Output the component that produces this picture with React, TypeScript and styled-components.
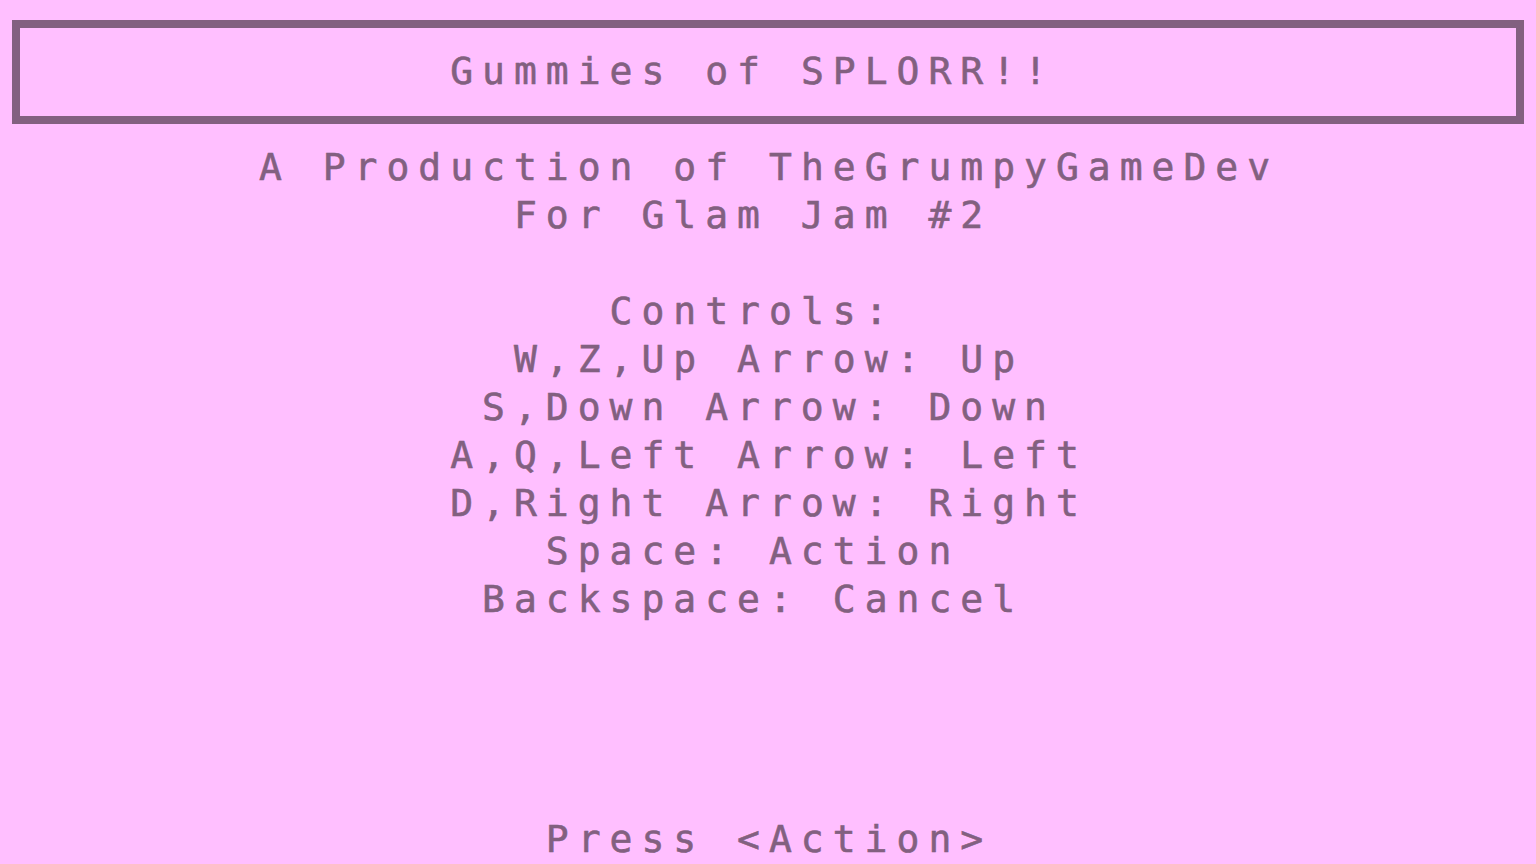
import React from 'react';
import styled, { createGlobalStyle } from 'styled-components';

const INK = '#826080';
const PAPER = '#ffbfff';

const GlobalStyle = createGlobalStyle`
    html, body {
        margin: 0;
        padding: 0;
        background: ${PAPER};
    }
    #root {
        height: 100vh;
    }
`;

const Screen = styled.div`
    display: flex;
    flex-direction: column;
    height: 864px;
    width: 1536px;
    overflow: hidden;
    background: ${PAPER};
    color: ${INK};
    font-family: 'DejaVu Sans Mono', 'Liberation Mono', monospace;
    font-size: 38px;
    -webkit-text-stroke: 0.6px ${INK};
`;

const TitleBox = styled.div`
    margin: 20px 12px 0 12px;
    border: 8px solid ${INK};
    padding: 20px 0;
    display: flex;
    justify-content: center;
`;

const Lines = styled.div`
    display: flex;
    flex-direction: column;
    align-items: center;
    margin-top: 20px;
`;

const Line = styled.div`
    height: 48px;
    line-height: 47px;
    white-space: pre;
    letter-spacing: 9px;
    padding-left: 2px;
`;

const Footer = styled(Lines)`
    margin-top: auto;
`;

// the screen is a 48 column character grid, so odd lines get a
// trailing space to land on a whole cell like the original does
const pad = (text: string) => (text.length % 2 ? text + ' ' : text);

const credits = [
    'A Production of TheGrumpyGameDev',
    'For Glam Jam #2',
    '',
    'Controls:',
    'W,Z,Up Arrow: Up',
    'S,Down Arrow: Down',
    'A,Q,Left Arrow: Left',
    'D,Right Arrow: Right',
    'Space: Action',
    'Backspace: Cancel',
];

const App = () => {
    return (
        <Screen>
            <GlobalStyle />
            <TitleBox>
                <Line>{pad('Gummies of SPLORR!!')}</Line>
            </TitleBox>
            <Lines>
                {credits.map((text, index) => (
                    <Line key={index}>{pad(text)}</Line>
                ))}
            </Lines>
            <Footer>
                <Line>{pad('Press <Action>')}</Line>
            </Footer>
        </Screen>
    );
};

export default App;
